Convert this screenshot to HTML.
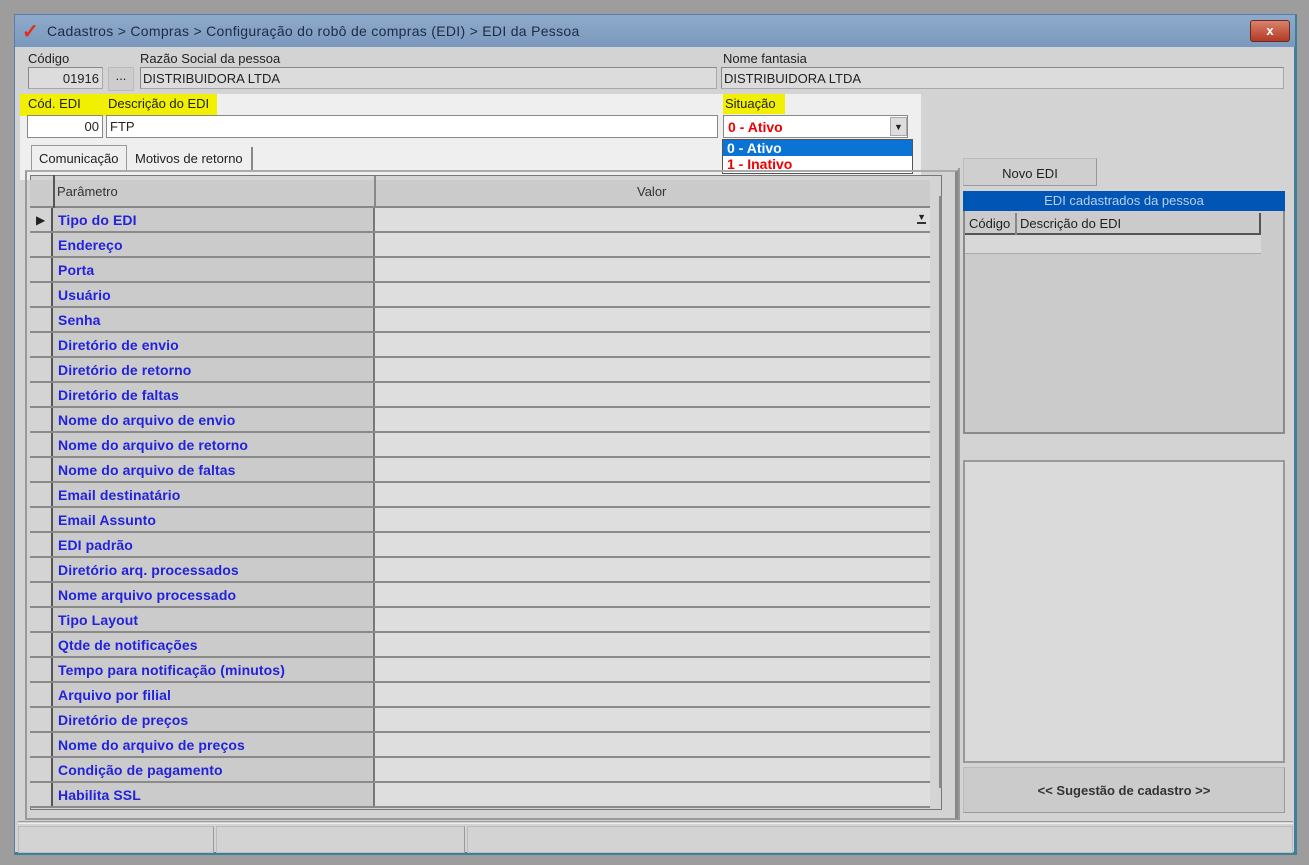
<!DOCTYPE html>
<html><head><meta charset="utf-8"><style>
*{box-sizing:border-box;margin:0;padding:0}
body{width:1309px;height:865px;background:#9d9d9d;position:relative;overflow:hidden;font-family:"Liberation Sans",sans-serif;font-size:13px;color:#222}
.a{position:absolute}
.in{background:#dcdcdc;border:1px solid #a8a8a8;border-top-color:#888;border-left-color:#888}
.w{background:#fff;border:1px solid #888}
.lbl{font-size:13px;color:#222}
.hl{background:#f0f000}
.row{position:absolute;left:0;width:900px;height:25px;border-bottom:2px solid #8a8a8a}
.row .ind{position:absolute;left:0;top:0;width:23px;height:23px;background:#d4d4d4;border-right:2px solid #555}
.row .p{position:absolute;left:23px;top:0;width:322px;height:23px;background:#cbcbcb;border-right:2px solid #777;color:#2222dd;font-weight:bold;padding:4px 0 0 5px;font-size:14px;letter-spacing:0.1px}
.row .v{position:absolute;left:345px;top:0;width:555px;height:23px;background:#dedede}
</style></head><body>
<div class="a" style="left:14px;top:14px;width:1283px;height:841px;background:#d3d3d3;border:1px solid #5a7fa5;border-bottom:3px solid #3f7f9a;border-right:3px solid #3f7f9a"></div>
<div class="a" style="left:15px;top:15px;width:1280px;height:32px;background:linear-gradient(#8eaacb,#7b99bd)"></div>
<div class="a" style="left:22px;top:19px;font-size:20px;color:#e0301a;font-weight:bold">✓</div>
<div class="a" style="left:47px;top:23px;font-size:14px;color:#1d2b44;letter-spacing:0.3px">Cadastros &gt; Compras &gt; Configuração do robô de compras (EDI) &gt; EDI da Pessoa</div>
<div class="a" style="left:1250px;top:20px;width:40px;height:22px;background:linear-gradient(#d8826d,#b33a24);border:1px solid #6a2a20;border-radius:3px;color:#fff;text-align:center;font-weight:bold;line-height:19px">x</div>

<div class="a lbl" style="left:28px;top:51px">Código</div>
<div class="a lbl" style="left:140px;top:51px">Razão Social da pessoa</div>
<div class="a lbl" style="left:723px;top:51px">Nome fantasia</div>
<div class="a in" style="left:28px;top:67px;width:75px;height:22px;text-align:right;padding:3px 3px 0 0">01916</div>
<div class="a" style="left:108px;top:67px;width:26px;height:24px;background:#cdcdcd;border:1px solid #bbb;text-align:center">...</div>
<div class="a in" style="left:140px;top:67px;width:577px;height:22px;padding:3px 2px 0 2px">DISTRIBUIDORA LTDA</div>
<div class="a in" style="left:721px;top:67px;width:563px;height:22px;padding:3px 2px 0 2px">DISTRIBUIDORA LTDA</div>

<div class="a" style="left:20px;top:94px;width:901px;height:86px;background:#efefef"></div>
<div class="a hl" style="left:20px;top:94px;width:197px;height:22px"></div>
<div class="a lbl" style="left:28px;top:96px">Cód. EDI</div>
<div class="a lbl" style="left:108px;top:96px">Descrição do EDI</div>
<div class="a lbl hl" style="left:723px;top:94px;width:62px;height:20px;padding:2px 0 0 2px">Situação</div>
<div class="a w" style="left:27px;top:115px;width:76px;height:23px;text-align:right;padding:3px 3px 0 0">00</div>
<div class="a w" style="left:106px;top:115px;width:612px;height:23px;padding:3px 3px 0 3px">FTP</div>
<div class="a w" style="left:723px;top:115px;width:185px;height:23px;color:#e00;font-weight:bold;padding:3px 4px;font-size:14px">0 - Ativo</div>
<div class="a" style="left:890px;top:117px;width:17px;height:19px;background:#ddd;border:1px solid #aaa;font-size:9px;text-align:center;line-height:18px">▼</div>
<div class="a" style="left:722px;top:139px;width:191px;height:35px;background:#fff;border:1px solid #555"></div>
<div class="a" style="left:723px;top:140px;width:189px;height:16px;background:#0a74d6;color:#fff;font-weight:bold;font-size:14px;padding:0 4px;line-height:16px">0 - Ativo</div>
<div class="a" style="left:723px;top:156px;width:189px;height:17px;color:#e00;font-weight:bold;font-size:14px;padding:0 4px;line-height:17px">1 - Inativo</div>
<div class="a" style="left:31px;top:145px;width:96px;height:25px;background:#efefef;border:1px solid #999;border-bottom:none;padding:5px 0 0 7px">Comunicação</div>
<div class="a" style="left:128px;top:147px;width:125px;height:23px;border-right:2px solid #888;padding:4px 0 0 7px">Motivos de retorno</div>

<div class="a" style="left:25px;top:170px;width:933px;height:650px;border:2px solid #9a9a9a;border-top-color:#aaa;border-right:3px solid #888"></div>
<div class="a" style="left:30px;top:175px;width:912px;height:635px;background:#d4d4d4;border:1px solid #777"></div>
<div class="a" style="left:30px;top:180px;width:900px;height:28px;background:#cbcbcb;border-bottom:2px solid #888"></div>
<div class="a" style="left:374px;top:176px;width:2px;height:32px;background:#888"></div>
<div class="a" style="left:53px;top:175px;width:2px;height:633px;background:#555"></div>
<div class="a" style="left:57px;top:184px;color:#333">Parâmetro</div>
<div class="a" style="left:637px;top:184px;color:#333">Valor</div>
<div class="a" style="left:30px;top:208px">
<div class="row" style="top:0"><div class="ind" style="font-size:12px;padding:5px 0 0 6px">▶</div><div class="p">Tipo do EDI</div><div class="v"><span style="position:absolute;right:4px;top:4px;font-size:9px;border-bottom:2px solid #333">▼</span></div></div>
<div class="row" style="top:25px"><div class="ind"></div><div class="p">Endereço</div><div class="v"></div></div>
<div class="row" style="top:50px"><div class="ind"></div><div class="p">Porta</div><div class="v"></div></div>
<div class="row" style="top:75px"><div class="ind"></div><div class="p">Usuário</div><div class="v"></div></div>
<div class="row" style="top:100px"><div class="ind"></div><div class="p">Senha</div><div class="v"></div></div>
<div class="row" style="top:125px"><div class="ind"></div><div class="p">Diretório de envio</div><div class="v"></div></div>
<div class="row" style="top:150px"><div class="ind"></div><div class="p">Diretório de retorno</div><div class="v"></div></div>
<div class="row" style="top:175px"><div class="ind"></div><div class="p">Diretório de faltas</div><div class="v"></div></div>
<div class="row" style="top:200px"><div class="ind"></div><div class="p">Nome do arquivo de envio</div><div class="v"></div></div>
<div class="row" style="top:225px"><div class="ind"></div><div class="p">Nome do arquivo de retorno</div><div class="v"></div></div>
<div class="row" style="top:250px"><div class="ind"></div><div class="p">Nome do arquivo de faltas</div><div class="v"></div></div>
<div class="row" style="top:275px"><div class="ind"></div><div class="p">Email destinatário</div><div class="v"></div></div>
<div class="row" style="top:300px"><div class="ind"></div><div class="p">Email Assunto</div><div class="v"></div></div>
<div class="row" style="top:325px"><div class="ind"></div><div class="p">EDI padrão</div><div class="v"></div></div>
<div class="row" style="top:350px"><div class="ind"></div><div class="p">Diretório arq. processados</div><div class="v"></div></div>
<div class="row" style="top:375px"><div class="ind"></div><div class="p">Nome arquivo processado</div><div class="v"></div></div>
<div class="row" style="top:400px"><div class="ind"></div><div class="p">Tipo Layout</div><div class="v"></div></div>
<div class="row" style="top:425px"><div class="ind"></div><div class="p">Qtde de notificações</div><div class="v"></div></div>
<div class="row" style="top:450px"><div class="ind"></div><div class="p">Tempo para notificação (minutos)</div><div class="v"></div></div>
<div class="row" style="top:475px"><div class="ind"></div><div class="p">Arquivo por filial</div><div class="v"></div></div>
<div class="row" style="top:500px"><div class="ind"></div><div class="p">Diretório de preços</div><div class="v"></div></div>
<div class="row" style="top:525px"><div class="ind"></div><div class="p">Nome do arquivo de preços</div><div class="v"></div></div>
<div class="row" style="top:550px"><div class="ind"></div><div class="p">Condição de pagamento</div><div class="v"></div></div>
<div class="row" style="top:575px"><div class="ind"></div><div class="p">Habilita SSL</div><div class="v"></div></div>
</div>
<div class="a" style="left:939px;top:196px;width:3px;height:592px;background:#888"></div>

<div class="a" style="left:958px;top:168px;width:2px;height:652px;background:#999"></div>
<div class="a" style="left:963px;top:158px;width:134px;height:28px;background:#cfcfcf;border:1px solid #bbb;border-right-color:#999;border-bottom-color:#999;text-align:center;padding-top:7px">Novo EDI</div>
<div class="a" style="left:963px;top:191px;width:322px;height:243px;border:2px solid #8a8a8a;background:#cbcbcb"></div>
<div class="a" style="left:963px;top:191px;width:322px;height:20px;background:#0055b5;color:#b8d0f0;text-align:center;padding-top:2px">EDI cadastrados da pessoa</div>
<div class="a" style="left:965px;top:213px;width:296px;height:22px;background:#cbcbcb;border-right:2px solid #555;border-bottom:2px solid #555"></div>
<div class="a" style="left:969px;top:216px">Código</div>
<div class="a" style="left:1015px;top:213px;width:2px;height:41px;background:#888"></div>
<div class="a" style="left:1020px;top:216px">Descrição do EDI</div>
<div class="a" style="left:965px;top:235px;width:296px;height:19px;background:#d8d8d8;border-bottom:1px solid #aaa"></div>
<div class="a" style="left:963px;top:460px;width:322px;height:303px;border:2px solid #999;background:#dadada"></div>
<div class="a" style="left:963px;top:767px;width:322px;height:46px;background:#cbcbcb;border:1px solid #bbb;border-right-color:#999;border-bottom-color:#999;text-align:center;padding-top:15px;font-weight:bold;color:#333">&lt;&lt; Sugestão de cadastro &gt;&gt;</div>

<div class="a" style="left:18px;top:821px;width:1275px;height:3px;border-top:1px solid #999;border-bottom:1px solid #eee"></div>
<div class="a" style="left:18px;top:826px;width:196px;height:27px;border:1px solid #bbb;border-right-color:#999"></div>
<div class="a" style="left:216px;top:826px;width:249px;height:27px;border:1px solid #bbb;border-right-color:#999"></div>
<div class="a" style="left:467px;top:826px;width:826px;height:27px;border:1px solid #bbb"></div>
</body></html>
